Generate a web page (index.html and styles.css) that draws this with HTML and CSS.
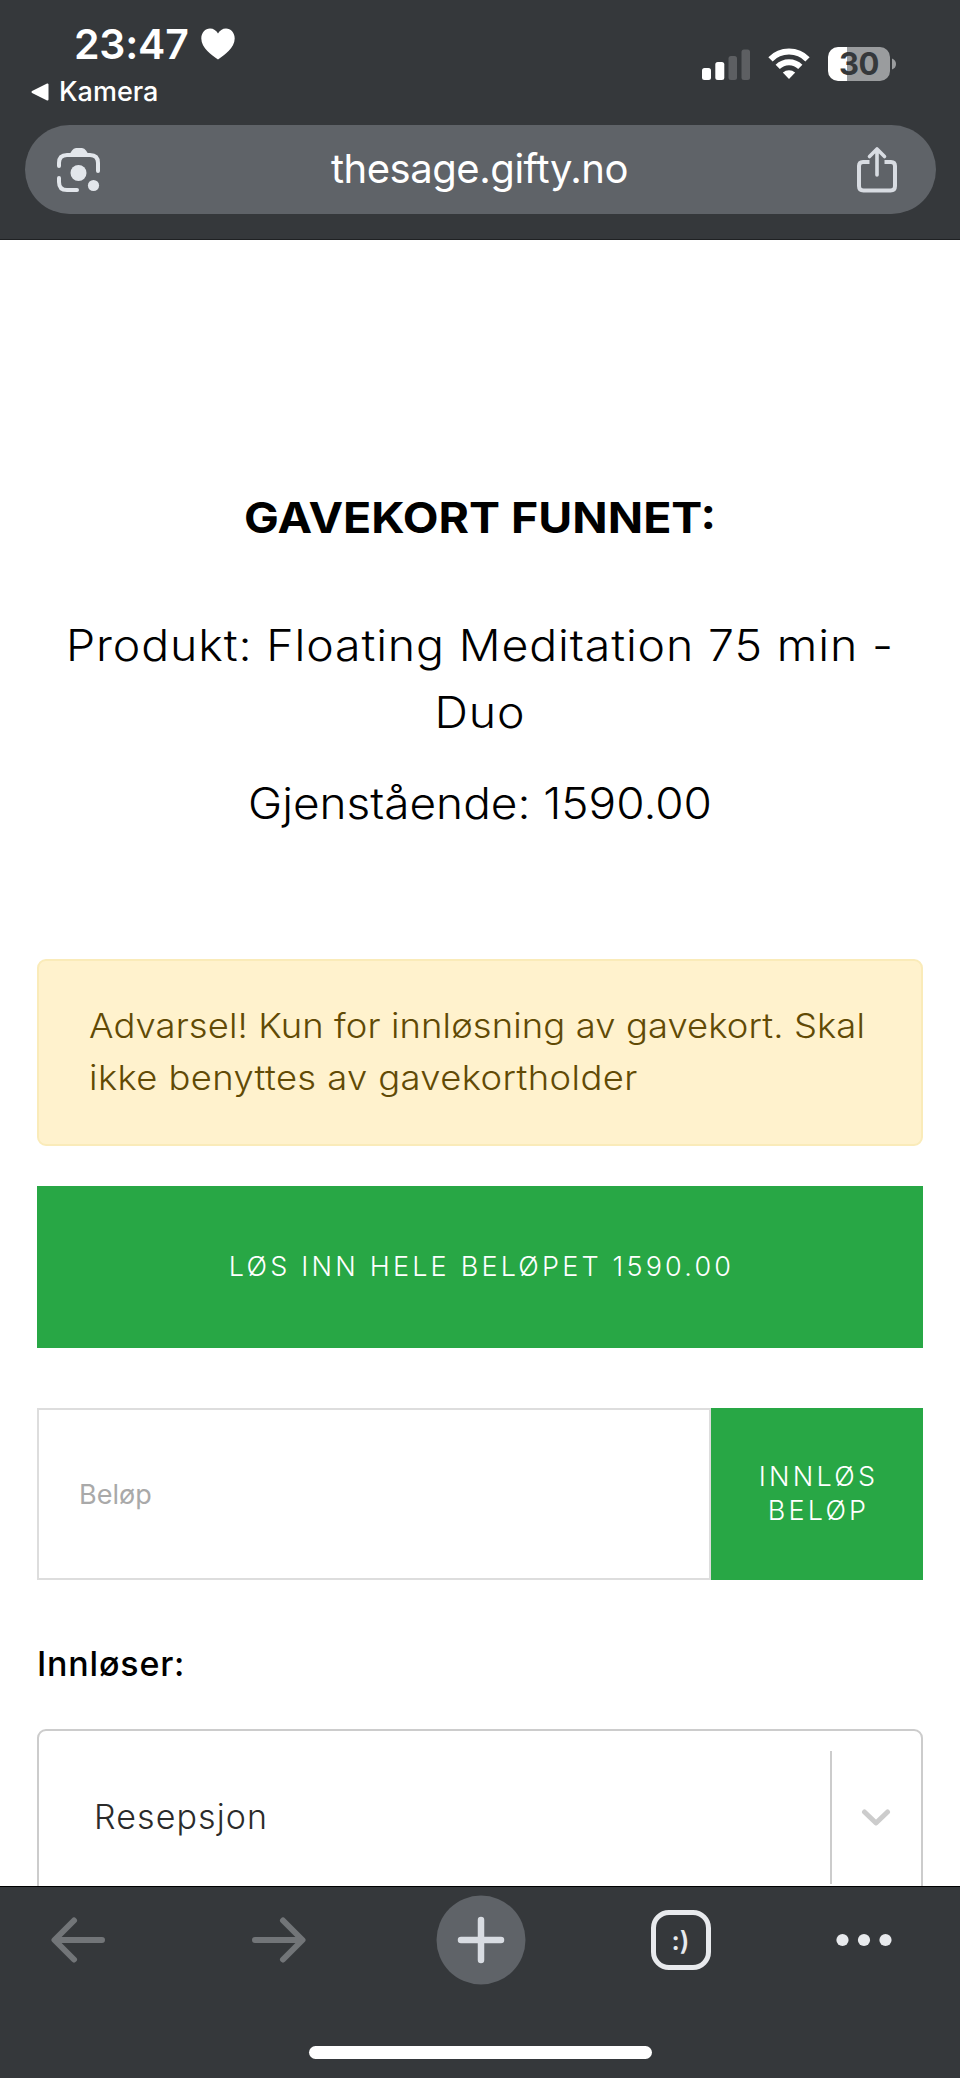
FILE: index.html
```html
<!DOCTYPE html>
<html lang="no">
<head>
<meta charset="utf-8">
<title>Gavekort</title>
<link rel="stylesheet" href="styles.css">
</head>
<body>
<div class="phone">
  <header class="top">
    <div class="status">
      <div class="status-left">
        <div class="clock"><span class="time">23:47</span>
          <svg class="heart" width="34" height="32" viewBox="0 0 34 32"><path d="M17 31.500C11 27 .300 20.500 .300 10.500C.300 4.500 4.300 .500 9 .500C12.500 .500 15.500 2.500 17 5.500C18.500 2.500 21.500 .500 25 .500C29.700 .500 33.700 4.500 33.700 10.500C33.700 20.500 23 27 17 31.500Z" fill="#fff"/></svg>
        </div>
        <div class="back">
          <svg width="18" height="18" viewBox="0 0 18 18"><path d="M16.500 1.500V16.500L1.500 9Z" fill="#fff" stroke="#fff" stroke-width="2" stroke-linejoin="round"/></svg>
          <span class="back-label">Kamera</span>
        </div>
      </div>
      <div class="indicators">
        <svg width="48" height="31" viewBox="0 0 48 31"><g fill="#fff"><rect y="19" width="9" height="12" rx="2.500"/><rect x="13.300" y="13" width="9" height="18" rx="2.500"/></g><g fill="#5d5f62"><rect x="26.500" y="7" width="8.500" height="24" rx="2.500"/><rect x="39.500" y="0.500" width="8.500" height="30.500" rx="2.500"/></g></svg>
        <svg class="wifi" width="42" height="32" viewBox="0 0 42 32"><g fill="none" stroke="#fff" stroke-width="6"><path d="M2.500 11.300C12.500 .900 29.500 .900 39.500 11.300"/><path d="M9.700 18.900C16 12.700 26 12.700 32.300 18.900"/></g><path d="M21 31L14.800 24.600C18.300 21.300 23.700 21.300 27.200 24.600Z" fill="#fff"/></svg>
        <div class="battery">30</div>
        <svg class="cap" width="4" height="12" viewBox="0 0 4 12"><path d="M0 .500Q4 2 4 6Q4 10 0 11.500Z" fill="#9a9c9e"/></svg>
      </div>
    </div>
    <div class="address">
      <svg width="46" height="46" viewBox="0 0 46 46"><g fill="none" stroke="#e2e6eb" stroke-width="4" stroke-linecap="round"><path d="M3 19V16Q3 8 11 8H34Q42 8 42 16V24"/><path d="M3 31V35Q3 43 11 43H21"/></g><path d="M13 8L16 3.500Q17.500 1 20 1H26Q28.500 1 30 3.500L33 8Z" fill="#e2e6eb"/><circle cx="22.500" cy="26" r="8" fill="#e2e6eb"/><circle cx="37.500" cy="38.500" r="5.600" fill="#e2e6eb"/></svg>
      <span class="url">thesage.gifty.no</span>
      <svg width="42" height="48" viewBox="0 0 42 48"><g fill="none" stroke="#d8dce2" stroke-width="4" stroke-linecap="round" stroke-linejoin="round"><path d="M13.500 16H7Q3 16 3 20V40Q3 44.500 7.500 44.500H34.500Q39 44.500 39 40V20Q39 16 35 16H28.500" stroke-linecap="butt"/><path d="M21 29V4M13.500 10.500L21 3L28.500 10.500" stroke-width="3.600"/></g></svg>
    </div>
  </header>

  <main class="page">
    <h1 class="title">GAVEKORT FUNNET:</h1>
    <p class="info product">Produkt: Floating Meditation 75 min -<br>Duo</p>
    <p class="info remaining">Gjenstående: 1590.00</p>
    <div class="alert">
      <div class="alert-line">Advarsel! Kun for innløsning av gavekort. Skal</div>
      <div class="alert-line alert-last">ikke benyttes av gavekortholder</div>
    </div>
    <button class="btn redeem-all">LØS INN HELE BELØPET 1590.00</button>
    <div class="amount">
      <input class="amount-input" type="text" placeholder="Beløp">
      <button class="btn redeem">INNLØS<br>BELØP</button>
    </div>
    <div class="label">Innløser:</div>
    <div class="select">
      <span class="value">Resepsjon</span>
      <span class="separator"></span>
      <svg class="chevron" width="30" height="20" viewBox="0 0 30 20"><path d="M3.500 4L15 15L26.500 4" fill="none" stroke="#ccc" stroke-width="5" stroke-linecap="round" stroke-linejoin="round"/></svg>
    </div>
  </main>

  <footer class="bottom">
    <nav class="tools">
      <svg width="56" height="46" viewBox="0 0 56 46"><path d="M52 23H5M24 3.500L4.500 23L24 42.500" fill="none" stroke="#727578" stroke-width="6" stroke-linecap="round" stroke-linejoin="round"/></svg>
      <svg width="56" height="46" viewBox="0 0 56 46"><path d="M4 23H51M32 3.500L51.500 23L32 42.500" fill="none" stroke="#727578" stroke-width="6" stroke-linecap="round" stroke-linejoin="round"/></svg>
      <svg width="90" height="90" viewBox="0 0 90 90"><circle cx="45" cy="45" r="44.500" fill="#5f6368"/><path d="M25 45H65M45 25V65" stroke="#d8dce2" stroke-width="6.500" stroke-linecap="round"/></svg>
      <div class="tabs"><span class="smile">:)</span></div>
      <svg width="56" height="14" viewBox="0 0 56 14"><g fill="#e8eaed"><circle cx="6.500" cy="7" r="6.100"/><circle cx="28" cy="7" r="6.100"/><circle cx="49.500" cy="7" r="6.100"/></g></svg>
    </nav>
    <div class="home"></div>
  </footer>
</div>
</body>
</html>
```
FILE: styles.css
```css
* { box-sizing: border-box; }
body { margin: 0; background: #fff; font-family: Inter, "Open Sans", sans-serif; }
svg { display: block; flex: none; }
.phone { width: 960px; height: 2078px; display: flex; flex-direction: column; overflow: hidden; }

.top { flex: none; height: 240px; background: #35383b; border-bottom: 1px solid #1f2123; color: #fff; }
.status { display: flex; justify-content: space-between; height: 125px; padding: 19px 64px 0 31px; }
.clock { display: flex; align-items: center; gap: 12px; height: 50px; padding-left: 43px; }
.time { font-size: 41px; font-weight: 600; letter-spacing: -0.2px; line-height: 50px; }
.back { display: flex; align-items: center; gap: 10px; height: 34px; margin-top: 6px; }
.back-label { font-size: 27px; font-weight: 500; line-height: 34px; }
.indicators { display: flex; align-items: center; height: 34px; margin-top: 28px; }
.wifi { margin-left: 18px; }
.battery { width: 62px; height: 34px; margin-left: 18px; border-radius: 10px; background: linear-gradient(90deg, #fff 19px, #9a9c9e 19px); color: #35383b; font-size: 31px; font-weight: 700; letter-spacing: -0.5px; line-height: 34px; text-align: center; }
.cap { margin-left: 2px; }
.address { display: flex; align-items: center; justify-content: space-between; width: 911px; height: 89px; margin: 0 auto; padding: 0 37px 0 31px; border-radius: 45px; background: #5f6368; }
.url { padding: 0 0 2px 1px; font-size: 40px; letter-spacing: -0.45px; line-height: 50px; }

.page { flex: none; height: 1646px; padding: 247px 37px 0; overflow: hidden; color: #000; }
.title { margin: 0; font-size: 43px; font-weight: 700; line-height: 60px; text-align: center; transform: scaleX(1.08); }
.info { margin: 0 -20px; font-size: 43px; font-weight: 300; line-height: 67px; text-align: center; white-space: nowrap; }
.product { margin-top: 65px; letter-spacing: 0.8px; transform: scaleX(1.08); }
.remaining { margin-top: 24px; transform: scaleX(1.068); }
.alert { height: 187px; margin-top: 122px; padding: 39px 50px; border: 2px solid #faebb9; border-radius: 9px; background: #fff2cd; color: #614a05; font-size: 34px; font-weight: 300; line-height: 52px; white-space: nowrap; }
.alert-line { width: 730px; letter-spacing: 0.1px; transform: scaleX(1.07); transform-origin: left; }
.alert-last { letter-spacing: 0.37px; }
.btn { border: 0; padding: 0 0 0 3px; background: #28a745; color: #fff; font-family: inherit; font-size: 27px; font-weight: 300; line-height: 34.500px; letter-spacing: 3.200px; }
.redeem-all { display: block; width: 886px; height: 162px; margin-top: 40px; }
.amount { display: flex; height: 172px; margin-top: 60px; }
.amount-input { width: 674px; height: 172px; padding: 0 40px; border: 2px solid #ddd; border-radius: 0; background: #fff; font-family: inherit; font-size: 27px; }
.amount-input::placeholder { color: #a9a9a9; opacity: 1; }
.redeem { width: 212px; }
.label { margin-top: 58px; font-size: 34px; font-weight: 500; letter-spacing: 0.8px; line-height: 52px; }
.select { display: flex; align-items: center; height: 177px; margin-top: 39px; padding-left: 55px; border: 2px solid #ccc; border-radius: 9px; }
.value { flex: 1; padding-bottom: 2px; color: #2b2b2b; font-size: 34px; font-weight: 300; letter-spacing: 1.1px; line-height: 52px; }
.separator { width: 2px; height: 133px; background: #ccc; }
.chevron { margin: 0 30px 0 29px; }

.bottom { flex: 1; background: #35383b; border-top: 1px solid #000; }
.tools { display: grid; grid-template-columns: 201px 184.500px 215px 185px 56px; align-items: center; height: 90px; margin-top: 8px; padding-left: 50px; }
.tabs { width: 60px; height: 60px; border: 5.500px solid #e8eaed; border-radius: 18px; color: #e8eaed; text-align: center; }
.smile { font-size: 26px; font-weight: 600; line-height: 51px; }
.home { width: 343px; height: 13px; margin: 61px auto 0; border-radius: 7px; background: #fff; }
```
